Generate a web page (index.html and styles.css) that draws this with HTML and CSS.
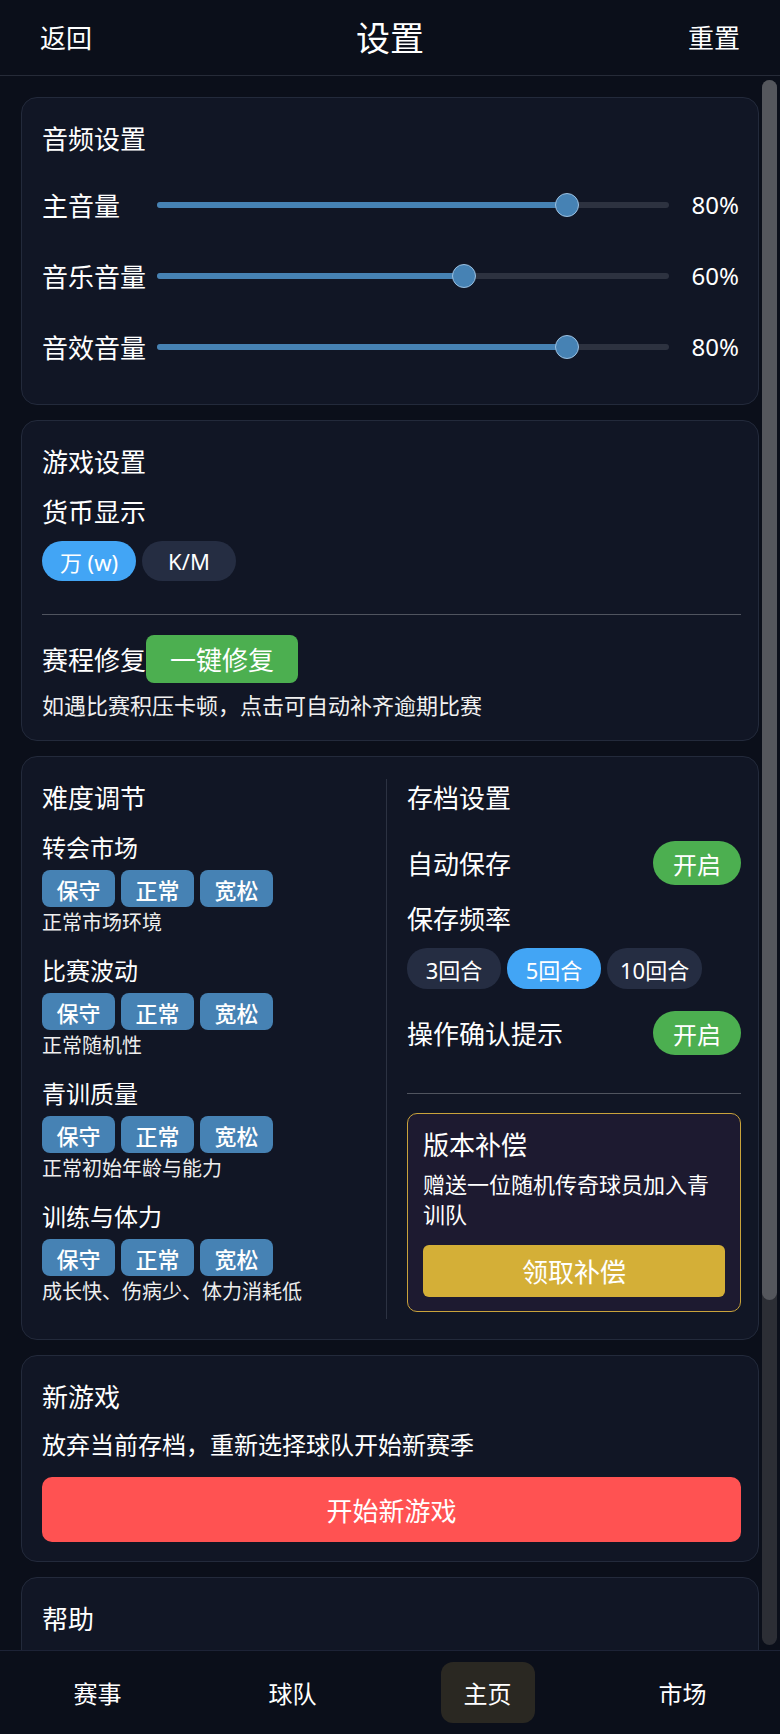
FILE: index.html
```html
<!DOCTYPE html>
<html lang="zh-CN">
<head>
<meta charset="utf-8">
<title>设置</title>
<link rel="stylesheet" href="styles.css">
</head>
<body>
<header class="topbar">
  <span class="topbar-link">返回</span>
  <h1 class="topbar-title">设置</h1>
  <span class="topbar-link right">重置</span>
</header>

<main class="main">
  <div class="scroll">
    <section class="card">
      <h2 class="card-title">音频设置</h2>
      <div class="slider-row">
        <span class="slider-label">主音量</span>
        <div class="slider"><div class="slider-fill" style="width:80%"></div><div class="slider-thumb" style="left:80%"></div></div>
        <span class="slider-value">80%</span>
      </div>
      <div class="slider-row">
        <span class="slider-label">音乐音量</span>
        <div class="slider"><div class="slider-fill" style="width:60%"></div><div class="slider-thumb" style="left:60%"></div></div>
        <span class="slider-value">60%</span>
      </div>
      <div class="slider-row">
        <span class="slider-label">音效音量</span>
        <div class="slider"><div class="slider-fill" style="width:80%"></div><div class="slider-thumb" style="left:80%"></div></div>
        <span class="slider-value">80%</span>
      </div>
    </section>

    <section class="card card-game">
      <h2 class="card-title">游戏设置</h2>
      <div class="sub-label">货币显示</div>
      <div class="pill-group">
        <span class="pill active">万 (w)</span>
        <span class="pill">K/M</span>
      </div>
      <hr class="divider divider-game">
      <div class="repair-row">
        <span class="repair-label">赛程修复</span>
        <span class="btn-green">一键修复</span>
      </div>
      <p class="hint">如遇比赛积压卡顿，点击可自动补齐逾期比赛</p>
    </section>

    <section class="card card-split">
      <div class="split">
        <div class="col-left">
          <h2 class="card-title title-diff">难度调节</h2>
          <div class="diff-group">
            <div class="diff-label">转会市场</div>
            <div class="diff-btns"><span class="diff-btn">保守</span><span class="diff-btn">正常</span><span class="diff-btn">宽松</span></div>
            <div class="diff-desc">正常市场环境</div>
          </div>
          <div class="diff-group">
            <div class="diff-label">比赛波动</div>
            <div class="diff-btns"><span class="diff-btn">保守</span><span class="diff-btn">正常</span><span class="diff-btn">宽松</span></div>
            <div class="diff-desc">正常随机性</div>
          </div>
          <div class="diff-group">
            <div class="diff-label">青训质量</div>
            <div class="diff-btns"><span class="diff-btn">保守</span><span class="diff-btn">正常</span><span class="diff-btn">宽松</span></div>
            <div class="diff-desc">正常初始年龄与能力</div>
          </div>
          <div class="diff-group">
            <div class="diff-label">训练与体力</div>
            <div class="diff-btns"><span class="diff-btn">保守</span><span class="diff-btn">正常</span><span class="diff-btn">宽松</span></div>
            <div class="diff-desc">成长快、伤病少、体力消耗低</div>
          </div>
        </div>
        <div class="col-right">
          <h2 class="card-title title-save">存档设置</h2>
          <div class="toggle-row">
            <span class="toggle-label">自动保存</span>
            <span class="toggle">开启</span>
          </div>
          <div class="freq-label">保存频率</div>
          <div class="pill-group freq">
            <span class="pill">3回合</span>
            <span class="pill active">5回合</span>
            <span class="pill">10回合</span>
          </div>
          <div class="toggle-row toggle-row-2">
            <span class="toggle-label">操作确认提示</span>
            <span class="toggle">开启</span>
          </div>
          <hr class="divider divider-save">
          <div class="comp">
            <div class="comp-title">版本补偿</div>
            <p class="comp-desc">赠送一位随机传奇球员加入青训队</p>
            <div class="btn-gold">领取补偿</div>
          </div>
        </div>
      </div>
    </section>

    <section class="card card-new">
      <h2 class="card-title">新游戏</h2>
      <p class="new-desc">放弃当前存档，重新选择球队开始新赛季</p>
      <div class="btn-red">开始新游戏</div>
    </section>

    <section class="card card-help">
      <h2 class="card-title">帮助</h2>
    </section>
  </div>
  <div class="rail">
    <div class="rail-track"><div class="rail-thumb"></div></div>
  </div>
</main>

<nav class="tabbar">
  <span class="tab">赛事</span>
  <span class="tab">球队</span>
  <span class="tab active">主页</span>
  <span class="tab">市场</span>
</nav>
</body>
</html>
```

FILE: styles.css
```css
* {
  box-sizing: border-box;
  margin: 0;
  padding: 0;
}

body {
  width: 780px;
  height: 1734px;
  overflow: hidden;
  background: #0b0f1a;
  color: #ffffff;
  font-family: "Noto Sans", "Noto Sans CJK SC", sans-serif;
  display: flex;
  flex-direction: column;
}

/* Header */
.topbar {
  flex: none;
  height: 76px;
  border-bottom: 1px solid #262b38;
  display: grid;
  grid-template-columns: 1fr auto 1fr;
  align-items: center;
  padding: 0 40px;
}

.topbar-link {
  font-size: 26px;
  line-height: 1;
}

.topbar-link.right {
  text-align: right;
}

.topbar-title {
  font-size: 34px;
  font-weight: 400;
  line-height: 1;
}

/* Main area */
.main {
  flex: none;
  height: 1574px;
  display: flex;
  overflow: hidden;
}

.scroll {
  flex: 1;
  overflow: hidden;
  padding: 21px 1px 0 21px;
  display: flex;
  flex-direction: column;
  gap: 15px;
}

.rail {
  flex: none;
  width: 20px;
  padding: 4px 3px 5px 2px;
}

.rail-track {
  height: 100%;
  background: #2c2e35;
  border-radius: 8px;
}

.rail-thumb {
  height: 1220px;
  background: #55575d;
  border-radius: 8px;
}

/* Cards */
.card {
  flex: none;
  background: #111625;
  border: 1px solid #232a3b;
  border-radius: 16px;
  padding: 22px 17px 22px 20px;
}

.card-title {
  font-size: 26px;
  line-height: 39px;
  font-weight: 400;
  margin-bottom: 10px;
}

/* Audio */
.slider-row {
  display: grid;
  grid-template-columns: 101px 1fr 58px;
  column-gap: 14px;
  align-items: center;
  height: 71px;
}

.slider-label {
  font-size: 26px;
  white-space: nowrap;
}

.slider {
  position: relative;
  height: 6px;
  background: #2d3240;
  border-radius: 3px;
}

.slider-fill {
  height: 100%;
  background: #4682b4;
  border-radius: 3px;
}

.slider-thumb {
  position: absolute;
  top: 50%;
  width: 24px;
  height: 24px;
  margin: -12px 0 0 -12px;
  border-radius: 50%;
  background: #4682b4;
  border: 1px solid #9cc0e0;
}

.slider-value {
  text-align: right;
  font-size: 24px;
  padding-right: 2px;
}

/* Game settings */
.card-game {
  padding-bottom: 18px;
}

.card-game .card-title {
  margin-bottom: 11px;
}

.sub-label {
  font-size: 26px;
  line-height: 39px;
}

.pill-group {
  display: flex;
  gap: 6px;
  margin-top: 9px;
}

.pill {
  min-width: 94px;
  height: 40px;
  padding: 0 13px;
  border-radius: 20px;
  background: #252d42;
  font-size: 22px;
  display: flex;
  align-items: center;
  justify-content: center;
  white-space: nowrap;
}

.pill.active {
  background: #42a5f5;
}

.divider {
  border: none;
  height: 1px;
  background: #50545f;
}

.divider-game {
  margin-top: 33px;
}

.repair-row {
  display: flex;
  align-items: center;
  margin-top: 20px;
}

.repair-label {
  font-size: 26px;
}

.btn-green {
  height: 48px;
  padding: 0 24px;
  border-radius: 8px;
  background: #4caf50;
  font-size: 26px;
  display: flex;
  align-items: center;
}

.hint {
  font-size: 22px;
  line-height: 33px;
  margin-top: 6px;
  color: #f0f0f0;
}

/* Split card */
.card-split {
  padding-bottom: 20px;
}

.split {
  display: grid;
  grid-template-columns: 345px 1fr;
}

.col-left {
  border-right: 1px solid #2c3242;
}

.col-right {
  padding-left: 20px;
  padding-bottom: 7px;
}

.title-diff {
  margin-bottom: 12px;
}

.title-save {
  margin-bottom: 11px;
}

.diff-group {
  margin-bottom: 15px;
}

.diff-group:last-child {
  margin-bottom: 0;
}

.diff-label {
  font-size: 24px;
  line-height: 36px;
}

.diff-btns {
  display: flex;
  gap: 6px;
  margin-top: 4px;
}

.diff-btn {
  width: 73px;
  height: 37px;
  border-radius: 8px;
  background: #4682b4;
  font-size: 22px;
  font-weight: 500;
  display: flex;
  align-items: center;
  justify-content: center;
}

.diff-desc {
  font-size: 20px;
  line-height: 30px;
  margin-top: 1px;
  color: #eeeeee;
}

.toggle-row {
  height: 68px;
  display: flex;
  align-items: center;
  justify-content: space-between;
}

.toggle-row-2 {
  margin-top: 10px;
}

.toggle-label {
  font-size: 26px;
}

.toggle {
  width: 88px;
  height: 44px;
  border-radius: 22px;
  background: #4caf50;
  font-size: 24px;
  display: flex;
  align-items: center;
  justify-content: center;
}

.freq-label {
  font-size: 26px;
  line-height: 39px;
  margin-top: 3px;
}

.freq .pill {
  height: 41px;
}

.divider-save {
  margin-top: 26px;
}

.comp {
  margin-top: 19px;
  border: 1px solid #c9a33b;
  border-radius: 10px;
  background: #1d1a30;
  padding: 14px 15px;
}

.comp-title {
  font-size: 26px;
  line-height: 34px;
}

.comp-desc {
  font-size: 22px;
  line-height: 30px;
  margin-top: 7px;
}

.btn-gold {
  margin-top: 16px;
  height: 52px;
  border-radius: 6px;
  background: #d4af37;
  font-size: 26px;
  display: flex;
  align-items: center;
  justify-content: center;
}

/* New game */
.card-new {
  padding-bottom: 19px;
}

.new-desc {
  font-size: 24px;
  line-height: 36px;
  margin-top: 2px;
}

.btn-red {
  margin-top: 14px;
  height: 65px;
  border-radius: 10px;
  background: #ff5252;
  font-size: 26px;
  display: flex;
  align-items: center;
  justify-content: center;
}

.card-help {
  min-height: 200px;
}

/* Tab bar */
.tabbar {
  flex: none;
  height: 84px;
  border-top: 1px solid #1d2336;
  display: grid;
  grid-template-columns: repeat(4, 1fr);
  align-items: center;
  justify-items: center;
}

.tab {
  width: 94px;
  height: 61px;
  border-radius: 12px;
  font-size: 24px;
  display: flex;
  align-items: center;
  justify-content: center;
}

.tab.active {
  background: #2a2822;
}
```
